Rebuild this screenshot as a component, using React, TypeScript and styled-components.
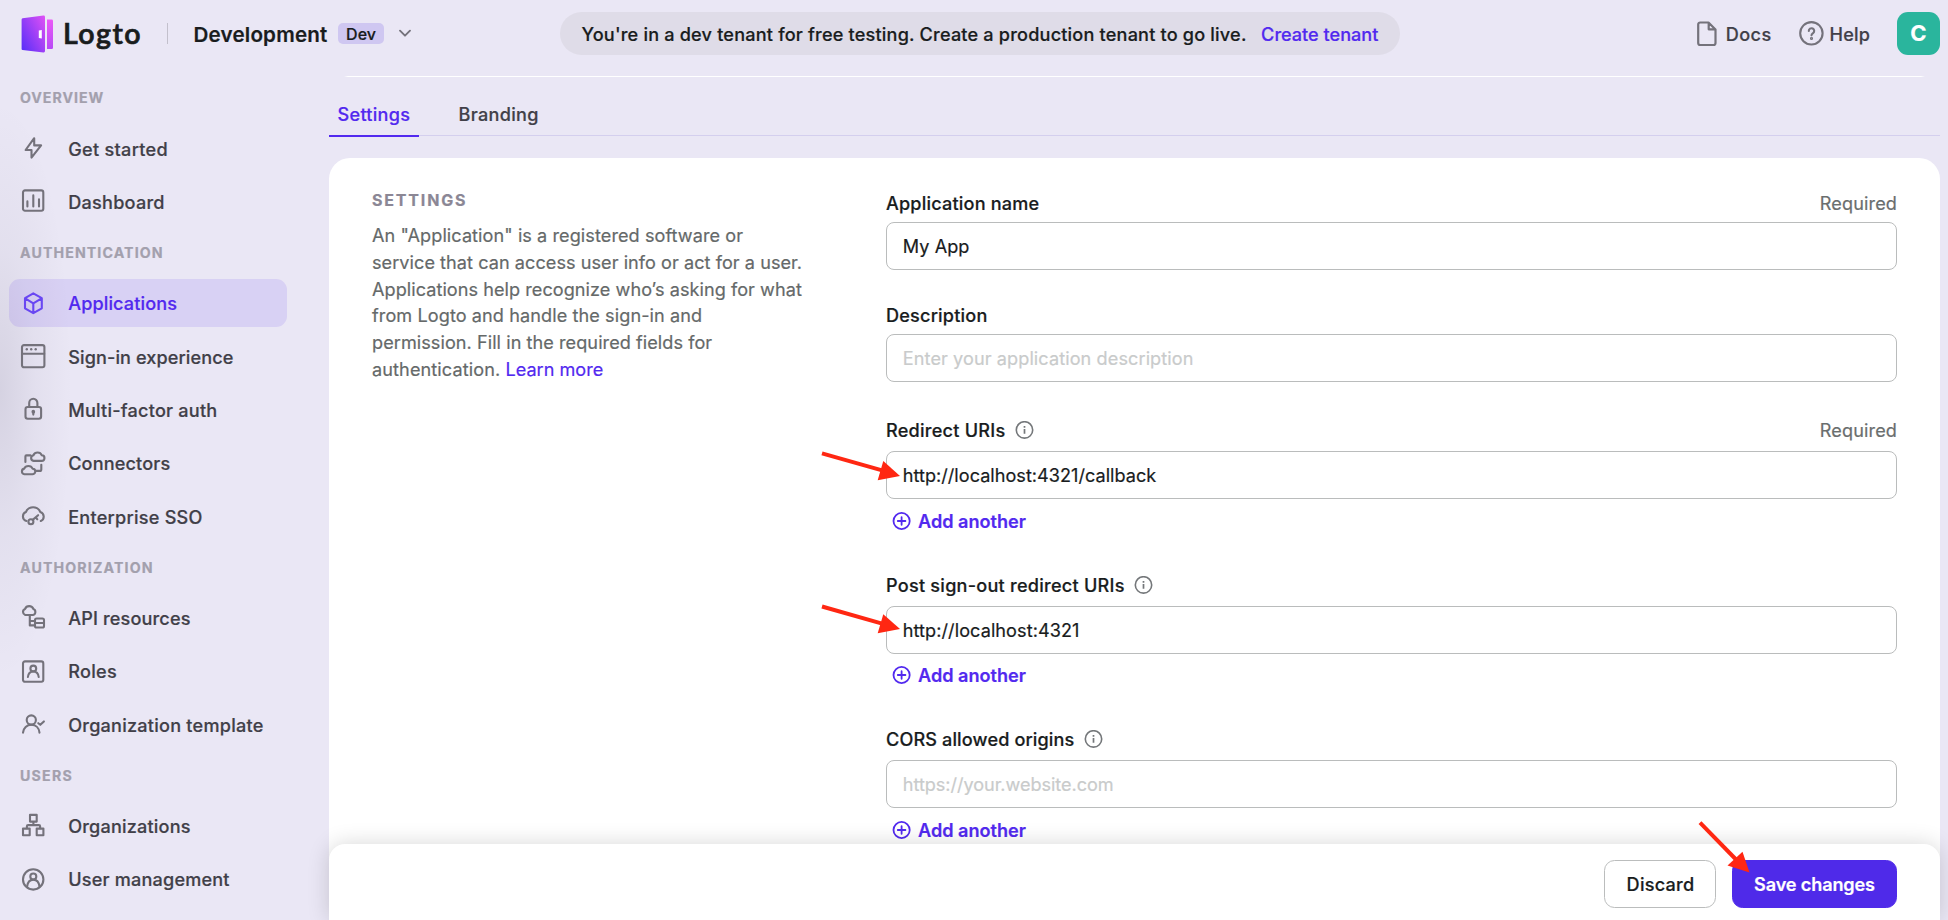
import React from "react";
import styled, { createGlobalStyle } from "styled-components";

const GlobalStyle = createGlobalStyle`
  *, *::before, *::after { box-sizing: border-box; }
  body {
    margin: 0;
    font-family: Inter, "Liberation Sans", sans-serif;
    font-size: 18.1px;
    color: #191c1d;
    -webkit-text-stroke: 0.2px;
    overflow: hidden;
  }
`;

/* ---------- layout ---------- */

const Page = styled.div`
  display: flex;
  flex-direction: column;
  height: 920px;
  overflow: hidden;
  background:
    radial-gradient(ellipse 72px 290px at 0 390px, rgba(30, 25, 55, 0.1), rgba(30, 25, 55, 0.035) 50%, rgba(30, 25, 55, 0)),
    #eae7f5;
`;

const TopBar = styled.header`
  display: flex;
  align-items: center;
  flex: none;
  height: 67px;
  padding: 0 8px 0 20px;
`;

const Body = styled.div`
  display: flex;
  flex: 1;
  min-height: 0;
`;

const Spacer = styled.div`
  flex: 1;
`;

const Track = styled.span<{ $ls?: number }>`
  letter-spacing: ${(p) => p.$ls ?? 0.2}px;
  white-space: nowrap;
`;

/* ---------- top bar ---------- */

const Brand = styled.div`
  display: flex;
  align-items: center;
  width: 147px;
  gap: 8px;
`;

const BrandName = styled.span`
  padding-bottom: 2px;
  font-family: Lato, "Liberation Sans", sans-serif;
  font-size: 28.5px;
  font-weight: 600;
  letter-spacing: 1.5px;
  line-height: 36px;
  -webkit-text-stroke: 0.7px;
`;

const Divider = styled.div`
  width: 1px;
  height: 21px;
  background: #c3c0cc;
`;

const Tenant = styled.div`
  display: flex;
  align-items: center;
  margin-left: 25.5px;
`;

const TenantName = styled.span`
  width: 144.5px;
  padding-top: 1px;
  font-size: 20.6px;
  font-weight: 600;
  letter-spacing: 0.19px;
`;

const TenantTag = styled.span`
  width: 46px;
  height: 21px;
  line-height: 22px;
  border-radius: 5px;
  background: #cfc7f1;
  font-size: 16px;
  font-weight: 500;
  text-align: center;
`;

const Chevron = styled.svg`
  margin-left: 14px;
`;

const Banner = styled.div`
  display: flex;
  align-items: center;
  gap: 14.5px;
  width: 840px;
  height: 43px;
  margin-left: 148px;
  padding: 0 0 0 21.5px;
  border-radius: 22px;
  background: #dfdce8;
  font-weight: 500;
`;

const Link = styled.a<{ $ls?: number }>`
  color: #5229ef;
  letter-spacing: ${(p) => p.$ls ?? 0}px;
  white-space: nowrap;
`;

const TopLink = styled.div<{ $gap: number }>`
  display: flex;
  align-items: center;
  gap: ${(p) => p.$gap}px;
  color: #413f48;
  font-weight: 500;

  & > span { padding-top: 1px; }
`;

const TopLinks = styled.div`
  display: flex;
  align-items: center;
  gap: 27px;
`;

const Avatar = styled.div`
  width: 43px;
  height: 43px;
  border-radius: 11px;
  background: #2ab59d;
  color: #fff;
  font-size: 22px;
  font-weight: 700;
  line-height: 43px;
  text-align: center;
`;

/* ---------- sidebar ---------- */

const Sidebar = styled.nav`
  flex: none;
  width: 329px;
  padding: 4.33px 42px 0 9px;
`;

const NavLabel = styled.div<{ $ls: number }>`
  height: 53.33px;
  padding-left: 11px;
  line-height: 53.33px;
  font-size: 14.2px;
  font-weight: 700;
  letter-spacing: ${(p) => p.$ls}px;
  color: #a3a0ad;
`;

const NavItems = styled.div`
  display: flex;
  flex-direction: column;
  gap: 5.33px;
`;

const NavItem = styled.div<{ $active?: boolean }>`
  display: flex;
  align-items: center;
  gap: 21.2px;
  height: 48px;
  padding-left: 11px;
  border-radius: 11px;
  font-weight: 500;
  background: ${(p) => (p.$active ? "rgba(93, 52, 242, 0.125)" : "transparent")};
  color: ${(p) => (p.$active ? "#5229ef" : "#413f48")};

  svg {
    flex: none;
    color: ${(p) => (p.$active ? "#6947f2" : "#74727b")};
  }
`;

/* ---------- main ---------- */

const Main = styled.main`
  position: relative;
  display: flex;
  flex-direction: column;
  width: 1611px;
  padding-top: 9px;
`;

const TopLine = styled.div`
  flex: none;
  height: 1px;
  margin: 0 15px;
  background: linear-gradient(90deg, rgba(255, 255, 255, 0), #fff 4px, #fff calc(100% - 4px), rgba(255, 255, 255, 0));
`;

const Tabs = styled.div`
  display: flex;
  flex: none;
  gap: 31px;
  height: 59px;
  border-bottom: 1px solid #d4cfee;
`;

const Tab = styled.div<{ $active?: boolean }>`
  height: 60px;
  min-width: 90px;
  padding: 0 0 0 8.6px;
  line-height: 75px;
  font-weight: 500;
  color: ${(p) => (p.$active ? "#5229ef" : "#413f48")};
  border-bottom: ${(p) => (p.$active ? "2px solid #5229ef" : "0")};
`;

const Card = styled.section`
  display: flex;
  flex: 1;
  min-height: 0;
  margin-top: 22px;
  padding: 32px 43px 0;
  border-radius: 21px 21px 0 0;
  background: #fff;
  overflow: hidden;
`;

const Intro = styled.div`
  flex: none;
  width: 514px;
`;

const IntroTitle = styled.div`
  height: 32px;
  padding-top: 1px;
  line-height: 19px;
  font-size: 16px;
  font-weight: 700;
  letter-spacing: 1.82px;
  color: #8b8795;
`;

const IntroText = styled.div`
  line-height: 26.8px;
  color: #656969;
`;

const IntroLine = styled.div<{ $ls: number }>`
  letter-spacing: ${(p) => p.$ls}px;
  white-space: nowrap;
`;

const Form = styled.div`
  flex: 1;
`;

const Field = styled.div<{ $gap?: number }>`
  margin-top: ${(p) => p.$gap ?? 0}px;
`;

const FieldHead = styled.div<{ $space: number }>`
  display: flex;
  align-items: center;
  justify-content: space-between;
  height: 27px;
  margin-bottom: ${(p) => p.$space}px;

  span { margin-top: -2px; }
`;

const FieldLabel = styled.div`
  display: flex;
  align-items: center;
  gap: 9.5px;
  font-weight: 500;
`;

const Required = styled.span`
  letter-spacing: 0.12px;
  color: #6a6e6e;
`;

const Input = styled.input<{ $ls: number }>`
  display: block;
  width: 100%;
  height: 48px;
  padding: 0 15.8px;
  border: 1px solid #babcbc;
  border-radius: 8px;
  outline: none;
  background: #fff;
  color: #191c1d;
  font: inherit;
  letter-spacing: ${(p) => p.$ls}px;

  &::placeholder {
    color: #c9cbcb;
    opacity: 1;
  }
`;

const AddButton = styled.div<{ $top: number }>`
  display: flex;
  align-items: center;
  gap: 7px;
  height: 28px;
  margin: ${(p) => p.$top}px 0 0 6px;
  font-weight: 600;
  color: #5229ef;
`;

const ActionBar = styled.footer`
  position: absolute;
  left: 0;
  right: 0;
  bottom: 0;
  display: flex;
  justify-content: flex-end;
  gap: 16px;
  height: 76px;
  padding: 16px 43px 0;
  border-radius: 16px 16px 0 0;
  background: #fff;
  box-shadow: 0 0 22px rgba(0, 0, 0, 0.16);
`;

const Button = styled.div<{ $primary?: boolean }>`
  width: ${(p) => (p.$primary ? 165 : 112)}px;
  height: 48px;
  padding-left: ${(p) => (p.$primary ? 0 : 1)}px;
  border: 1px solid ${(p) => (p.$primary ? "#4f2ae9" : "#bbbdbd")};
  border-radius: 10.5px;
  background: ${(p) => (p.$primary ? "#4f2ae9" : "#fff")};
  color: ${(p) => (p.$primary ? "#fff" : "#191c1d")};
  font-weight: ${(p) => (p.$primary ? 600 : 500)};
  letter-spacing: ${(p) => (p.$primary ? -0.14 : 0.25)}px;
  line-height: 47px;
  text-align: center;
`;

const ArrowLayer = styled.svg`
  position: absolute;
  top: 0;
  left: 0;
  pointer-events: none;
`;

/* ---------- icons ---------- */

const Glyph = ({ children }: { children: React.ReactNode }) => (
  <svg width="27" height="27" viewBox="0 0 27 27" fill="none" stroke="currentColor" strokeWidth="2.1" strokeLinecap="round" strokeLinejoin="round">
    {children}
  </svg>
);

const Bolt = () => (
  <Glyph><path d="M14.2 3.2 5.6 15h5.9v7.6l9.6-12.2h-6.9z" /></Glyph>
);
const Chart = () => (
  <Glyph>
    <rect x="3" y="2.4" width="20.3" height="20.3" rx="2" />
    <path d="M7.4 13.4v5M13.3 7.4v11M19 11.4v7" />
  </Glyph>
);
const Cube = () => (
  <Glyph><path d="M13.3 3.4l8.5 4.8v10.1l-8.5 4.9L5 18.3V8.2zM5.2 8.4l8.1 4.9 8.3-4.9M13.3 13.3v9.6" /></Glyph>
);
const Browser = () => (
  <Glyph>
    <rect x="2" y="2.1" width="22.4" height="22.2" rx="2" />
    <path d="M2.2 10.8h22" />
    <g fill="currentColor" stroke="none">
      <circle cx="6.8" cy="6.3" r="1.2" /><circle cx="11.2" cy="6.3" r="1.2" /><circle cx="15.7" cy="6.3" r="1.2" />
    </g>
  </Glyph>
);
const Lock = () => (
  <Glyph>
    <rect x="5.5" y="11" width="15.6" height="11.8" rx="2.2" />
    <path d="M9.2 10.8V6.9a4.1 4.1 0 0 1 8.2 0v3.9" />
    <circle cx="13.3" cy="15.7" r="0.8" fill="currentColor" />
    <path d="M13.3 16v2.6" />
  </Glyph>
);
const Connectors = () => (
  <Glyph>
    <path d="M13.6 10.9a2.9 2.9 0 0 1-.2-5.7a4.6 4.6 0 0 1 8.4.1a2.8 2.8 0 0 1-.3 5.6z" />
    <path d="M4.4 24.3a2.9 2.9 0 0 1-.2-5.7a4.6 4.6 0 0 1 8.4.1a2.8 2.8 0 0 1-.3 5.6z" />
    <path d="M5.4 12V6.4a1 1 0 0 1 1-1h4M21.3 14.8v4.6a1.5 1.5 0 0 1-1.5 1.5h-3.6" />
  </Glyph>
);
const CloudKey = () => (
  <Glyph>
    <path d="M6.4 18A4.7 4.7 0 0 1 5.9 9.1A7.8 7.8 0 0 1 20.3 9A4.8 4.8 0 0 1 20.8 18" />
    <circle cx="10.9" cy="18.8" r="2.5" />
    <path d="M12.7 16.9l5.4-4.7M15.8 14.4l1.5 1.9" />
  </Glyph>
);
const CloudServer = () => (
  <Glyph>
    <path d="M5.2 11a3.2 3.2 0 0 1-.2-6a4.5 4.5 0 0 1 8.4.1a3.1 3.1 0 0 1-.4 5.9z" />
    <path d="M9.8 11.2v10.2h4.6M9.8 17h4.6" />
    <rect x="15" y="14.5" width="9" height="9" rx="1.6" />
    <path d="M15.2 19h8.6" />
  </Glyph>
);
const Roles = () => (
  <Glyph>
    <rect x="3" y="3.4" width="20.3" height="20.4" rx="2" />
    <circle cx="13.3" cy="10.5" r="2.9" />
    <path d="M7.9 19c.4-3.4 2.6-5.5 5.4-5.5s5 2.1 5.4 5.5" />
  </Glyph>
);
const UserCheck = () => (
  <Glyph>
    <circle cx="11.3" cy="9" r="4.6" />
    <path d="M3 21.7c.4-4.8 3.9-8 8.3-8s7.8 3.2 8.2 8M18.3 12.2l2 1.6 3.6-3.4" />
  </Glyph>
);
const OrgChart = () => (
  <Glyph>
    <rect x="10" y="2.9" width="6.7" height="6.7" />
    <rect x="3" y="16.6" width="6.7" height="6.7" />
    <rect x="16.7" y="16.6" width="6.7" height="6.7" />
    <path d="M6.9 16.2v-1.9a1.2 1.2 0 0 1 1.2-1.2h10.8a1.2 1.2 0 0 1 1.2 1.2v1.9M13.4 10v3" />
  </Glyph>
);
const UserCircle = () => (
  <Glyph>
    <circle cx="13.2" cy="13.4" r="10.2" />
    <circle cx="13.3" cy="10.5" r="3" />
    <path d="M7 20.8c.6-4.2 3-7.2 6.3-7.2s5.7 3 6.3 7.2" />
  </Glyph>
);

const InfoIcon = () => (
  <svg width="19" height="19" viewBox="0 0 19 19" fill="none" stroke="#74777a" strokeWidth="1.6">
    <circle cx="9.5" cy="8.9" r="8.2" />
    <path d="M9.5 8.1v4.7M9.5 5v1.7" strokeWidth="1.7" />
  </svg>
);
const PlusIcon = () => (
  <svg width="19" height="19" viewBox="0 0 19 19" fill="none" stroke="currentColor" strokeWidth="1.8" strokeLinecap="round">
    <circle cx="9.6" cy="9" r="8.1" />
    <path d="M9.6 5.2v7.6M5.8 9h7.6" />
  </svg>
);
const DocIcon = () => (
  <svg width="20" height="26" viewBox="0 0 20 26" fill="none" stroke="#74727b" strokeWidth="2.2" strokeLinejoin="round">
    <path d="M3 1.5h8.5L18.5 8.6V22a2 2 0 0 1-2 2H3.2a2 2 0 0 1-2-2V3.5a2 2 0 0 1 2-2zM11.7 1.8v6.5h6.5" />
  </svg>
);
const HelpIcon = () => (
  <svg width="25" height="25" viewBox="0 0 25 25" fill="none" stroke="#74727b" strokeWidth="2.1" strokeLinecap="round">
    <circle cx="12.4" cy="12.3" r="11.2" />
    <path d="M9.8 10a2.7 2.7 0 1 1 4.3 2.1c-1 .7-1.6 1.1-1.6 2.2" />
    <circle cx="12.5" cy="17.4" r="0.5" fill="#74727b" />
  </svg>
);
const LogoMark = () => (
  <svg width="35" height="40" viewBox="0 0 35 40">
    <defs>
      <linearGradient id="door" x1="0" y1="0.9" x2="1" y2="0.05">
        <stop offset="0" stopColor="#5a2ff8" />
        <stop offset="1" stopColor="#dd50f5" />
      </linearGradient>
      <linearGradient id="frame" x1="0" y1="1" x2="0" y2="0">
        <stop offset="0" stopColor="#b84af6" />
        <stop offset="1" stopColor="#ea59f7" />
      </linearGradient>
    </defs>
    <path d="M2.6 4.3 23.4 1.6Q25 1.4 25 2.9V37.1Q25 38.6 23.4 38.4L2.6 36.1Q1.6 36 1.6 34.9V5.5Q1.6 4.5 2.6 4.3z" fill="url(#door)" />
    <path d="M27 5.5h4.5A1.4 1.4 0 0 1 33 6.9v26.8a1.4 1.4 0 0 1-1.5 1.4H27z" fill="url(#frame)" />
    <path d="M18.8 16.6l3-.5v8.3l-3-.5z" fill="#fff" />
  </svg>
);

/* ---------- data ---------- */

type Entry = { text: string; ls: number; icon: () => React.ReactElement; active?: boolean };
const sections: { label: string; ls: number; items: Entry[] }[] = [
  {
    label: "OVERVIEW", ls: 0.95,
    items: [
      { text: "Get started", ls: 0.3, icon: Bolt },
      { text: "Dashboard", ls: 0.25, icon: Chart },
    ],
  },
  {
    label: "AUTHENTICATION", ls: 1.1,
    items: [
      { text: "Applications", ls: 0.12, icon: Cube, active: true },
      { text: "Sign-in experience", ls: 0.1, icon: Browser },
      { text: "Multi-factor auth", ls: 0.22, icon: Lock },
      { text: "Connectors", ls: 0.14, icon: Connectors },
      { text: "Enterprise SSO", ls: 0.24, icon: CloudKey },
    ],
  },
  {
    label: "AUTHORIZATION", ls: 1.13,
    items: [
      { text: "API resources", ls: 0.15, icon: CloudServer },
      { text: "Roles", ls: 0.3, icon: Roles },
      { text: "Organization template", ls: 0.23, icon: UserCheck },
    ],
  },
  {
    label: "USERS", ls: 1.2,
    items: [
      { text: "Organizations", ls: 0.18, icon: OrgChart },
      { text: "User management", ls: 0.19, icon: UserCircle },
    ],
  },
];

const AddAnother = ({ top = 8 }: { top?: number }) => (
  <AddButton $top={top}><PlusIcon />Add another</AddButton>
);

const Arrow = ({ line, head }: { line: string; head: string }) => (
  <g>
    <path d={line} stroke="#ff2712" strokeWidth="4" fill="none" />
    <path d={head} fill="#ff2712" />
  </g>
);

export default function App() {
  return (
    <Page>
      <GlobalStyle />
      <TopBar>
        <Brand>
          <LogoMark />
          <BrandName>Logto</BrandName>
        </Brand>
        <Divider />
        <Tenant>
          <TenantName>Development</TenantName>
          <TenantTag>Dev</TenantTag>
          <Chevron width="14" height="10" viewBox="0 0 14 10" fill="none" stroke="#74727b" strokeWidth="1.9" strokeLinecap="round" strokeLinejoin="round">
            <path d="M2 1.7l5 5 5-5" />
          </Chevron>
        </Tenant>
        <Banner>
          <Track $ls={0.19}>You're in a dev tenant for free testing. Create a production tenant to go live.</Track>
          <Link>Create tenant</Link>
        </Banner>
        <Spacer />
        <TopLinks>
          <TopLink $gap={9}><DocIcon /><Track $ls={0.4}>Docs</Track></TopLink>
          <TopLink $gap={6}><HelpIcon /><Track $ls={0.15}>Help</Track></TopLink>
          <Avatar>C</Avatar>
        </TopLinks>
      </TopBar>
      <Body>
        <Sidebar>
          {sections.map((s) => (
            <section key={s.label}>
              <NavLabel $ls={s.ls}>{s.label}</NavLabel>
              <NavItems>
                {s.items.map(({ text, ls, icon: Icon, active }) => (
                  <NavItem key={text} $active={active}>
                    <Icon />
                    <Track $ls={ls}>{text}</Track>
                  </NavItem>
                ))}
              </NavItems>
            </section>
          ))}
        </Sidebar>
        <Main>
          <TopLine />
          <Tabs>
            <Tab $active><Track $ls={0.25}>Settings</Track></Tab>
            <Tab><Track $ls={0.3}>Branding</Track></Tab>
          </Tabs>
          <Card>
            <Intro>
              <IntroTitle>SETTINGS</IntroTitle>
              <IntroText>
                <IntroLine $ls={0.07}>An "Application" is a registered software or</IntroLine>
                <IntroLine $ls={0.05}>service that can access user info or act for a user.</IntroLine>
                <IntroLine $ls={0.05}>Applications help recognize who’s asking for what</IntroLine>
                <IntroLine $ls={0.09}>from Logto and handle the sign-in and</IntroLine>
                <IntroLine $ls={0.06}>permission. Fill in the required fields for</IntroLine>
                <IntroLine $ls={0.1}>authentication. <Link $ls={0}>Learn more</Link></IntroLine>
              </IntroText>
            </Intro>
            <Form>
              <Field>
                <FieldHead $space={5}>
                  <FieldLabel><Track $ls={0.18}>Application name</Track></FieldLabel>
                  <Required>Required</Required>
                </FieldHead>
                <Input $ls={0.05} defaultValue="My App" />
              </Field>
              <Field $gap={32}>
                <FieldHead $space={5}>
                  <FieldLabel><Track $ls={0.2}>Description</Track></FieldLabel>
                </FieldHead>
                <Input $ls={0.09} placeholder="Enter your application description" />
              </Field>
              <Field $gap={35}>
                <FieldHead $space={7}>
                  <FieldLabel><Track $ls={0.24}>Redirect URIs</Track><InfoIcon /></FieldLabel>
                  <Required>Required</Required>
                </FieldHead>
                <Input $ls={0.02} defaultValue="http://localhost:4321/callback" />
                <AddAnother />
              </Field>
              <Field $gap={37}>
                <FieldHead $space={7}>
                  <FieldLabel><Track $ls={0.24}>Post sign-out redirect URIs</Track><InfoIcon /></FieldLabel>
                </FieldHead>
                <Input $ls={0.07} defaultValue="http://localhost:4321" />
                <AddAnother top={7} />
              </Field>
              <Field $gap={37}>
                <FieldHead $space={7}>
                  <FieldLabel><Track $ls={0.13}>CORS allowed origins</Track><InfoIcon /></FieldLabel>
                </FieldHead>
                <Input $ls={-0.04} placeholder="https://your.website.com" />
                <AddAnother />
              </Field>
            </Form>
          </Card>
          <ActionBar>
            <Button>Discard</Button>
            <Button $primary>Save changes</Button>
          </ActionBar>
        </Main>
      </Body>
      <ArrowLayer width="1948" height="920" viewBox="0 0 1948 920">
        <Arrow line="M822 453.3 883 470.7" head="M900 476 883.3 461 877.7 480.2z" />
        <Arrow line="M822 606.5 883 623.8" head="M900 629 883.3 614.2 877.7 633.2z" />
        <Arrow line="M1700 822.7 1737 860.5" head="M1749.5 872.5 1742.5 851.8 1727.5 865.5z" />
      </ArrowLayer>
    </Page>
  );
}
